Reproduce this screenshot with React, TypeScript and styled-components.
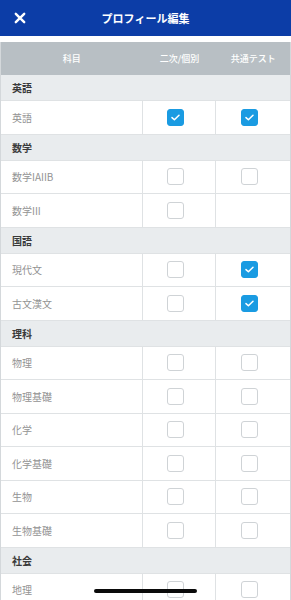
import React from "react";
import styled, { createGlobalStyle } from "styled-components";

const Global = createGlobalStyle`
  html, body { margin: 0; padding: 0; background: #ffffff; overflow: hidden; }
  body { font-family: "Noto Sans CJK JP", "Noto Sans", sans-serif; }
  * { box-sizing: border-box; }
`;

const Page = styled.div`
  width: 291px;
  height: 600px;
  position: relative;
  overflow: hidden;
  background: #fff;
`;

const NavBar = styled.header`
  height: 36px;
  background: #0c3da7;
  display: grid;
  grid-template-columns: 40px 1fr 40px;
  align-items: center;
`;

const CloseButton = styled.button`
  border: 0;
  background: transparent;
  padding: 0 0 0 14px;
  display: flex;
  align-items: center;
  height: 36px;
`;

const Title = styled.h1`
  margin: 0;
  text-align: center;
  color: #fff;
  font-size: 11px;
  font-weight: 700;
  letter-spacing: 0;
`;

const Table = styled.div`
  margin-top: 6px;
  border-left: 1px solid #d4d8db;
  border-right: 1px solid #d4d8db;
`;

const Row = styled.div<{ $kind: "head" | "section" | "data" }>`
  display: grid;
  grid-template-columns: 49% 25.5% 25.5%;
  height: ${(p) => (p.$kind === "head" ? "33px" : p.$kind === "section" ? "26px" : "33.5px")};
  background: ${(p) => (p.$kind === "head" ? "#b8bfc4" : p.$kind === "section" ? "#e9ecee" : "#ffffff")};
  border-bottom: 1px solid ${(p) => (p.$kind === "head" ? "#b8bfc4" : "#dfe2e4")};
`;

const HeadCell = styled.div`
  display: flex;
  align-items: center;
  justify-content: center;
  color: #fff;
  font-size: 9px;
  font-weight: 500;
`;

const SectionLabel = styled.div`
  grid-column: 1 / -1;
  display: flex;
  align-items: center;
  padding-left: 11px;
  color: #3a3a3a;
  font-size: 10px;
  font-weight: 700;
`;

const NameCell = styled.div`
  display: flex;
  align-items: center;
  padding-left: 11px;
  color: #939393;
  font-size: 10px;
  border-right: 1px solid #dfe2e4;
`;

const CheckCell = styled.div<{ $last?: boolean }>`
  display: flex;
  align-items: center;
  justify-content: center;
  padding-right: 7px;
  border-right: ${(p) => (p.$last ? "0" : "1px solid #dfe2e4")};
`;

const Box = styled.span<{ $on: boolean }>`
  width: 17px;
  height: 17px;
  border-radius: 3px;
  display: flex;
  align-items: center;
  justify-content: center;
  background: ${(p) => (p.$on ? "#1a9be2" : "#ffffff")};
  border: 1px solid ${(p) => (p.$on ? "#1a9be2" : "#cfd3d6")};
`;

const HomeIndicator = styled.div`
  position: absolute;
  left: 94px;
  bottom: 7px;
  width: 103px;
  height: 4px;
  border-radius: 2px;
  background: #0a0a0a;
`;

type Item = { name: string; a: boolean | null; b: boolean | null };
type Group = { title: string; items: Item[] };

const groups: Group[] = [
  { title: "英語", items: [{ name: "英語", a: true, b: true }] },
  {
    title: "数学",
    items: [
      { name: "数学IAIIB", a: false, b: false },
      { name: "数学III", a: false, b: null },
    ],
  },
  {
    title: "国語",
    items: [
      { name: "現代文", a: false, b: true },
      { name: "古文漢文", a: false, b: true },
    ],
  },
  {
    title: "理科",
    items: [
      { name: "物理", a: false, b: false },
      { name: "物理基礎", a: false, b: false },
      { name: "化学", a: false, b: false },
      { name: "化学基礎", a: false, b: false },
      { name: "生物", a: false, b: false },
      { name: "生物基礎", a: false, b: false },
    ],
  },
  {
    title: "社会",
    items: [{ name: "地理", a: false, b: false }],
  },
];

const Check = ({ on }: { on: boolean | null }) => {
  if (on === null) return null;
  return (
    <Box $on={on}>
      {on && (
        <svg width="9" height="7" viewBox="0 0 9 7" fill="none">
          <path d="M1 3.6 L3.4 5.8 L8 1.2" stroke="#fff" strokeWidth="1.5" strokeLinecap="round" strokeLinejoin="round" />
        </svg>
      )}
    </Box>
  );
};

export default function App() {
  return (
    <Page>
      <Global />
      <NavBar>
        <CloseButton aria-label="閉じる">
          <svg width="12" height="12" viewBox="0 0 12 12">
            <path d="M1.8 1.8 L10.2 10.2 M10.2 1.8 L1.8 10.2" stroke="#fff" strokeWidth="2.4" strokeLinecap="round" />
          </svg>
        </CloseButton>
        <Title>プロフィール編集</Title>
        <span />
      </NavBar>
      <Table>
        <Row $kind="head">
          <HeadCell>科目</HeadCell>
          <HeadCell>二次/個別</HeadCell>
          <HeadCell>共通テスト</HeadCell>
        </Row>
        {groups.map((g) => (
          <React.Fragment key={g.title}>
            <Row $kind="section">
              <SectionLabel>{g.title}</SectionLabel>
            </Row>
            {g.items.map((it) => (
              <Row $kind="data" key={it.name}>
                <NameCell>{it.name}</NameCell>
                <CheckCell>
                  <Check on={it.a} />
                </CheckCell>
                <CheckCell $last>
                  <Check on={it.b} />
                </CheckCell>
              </Row>
            ))}
          </React.Fragment>
        ))}
      </Table>
      <HomeIndicator />
    </Page>
  );
}
